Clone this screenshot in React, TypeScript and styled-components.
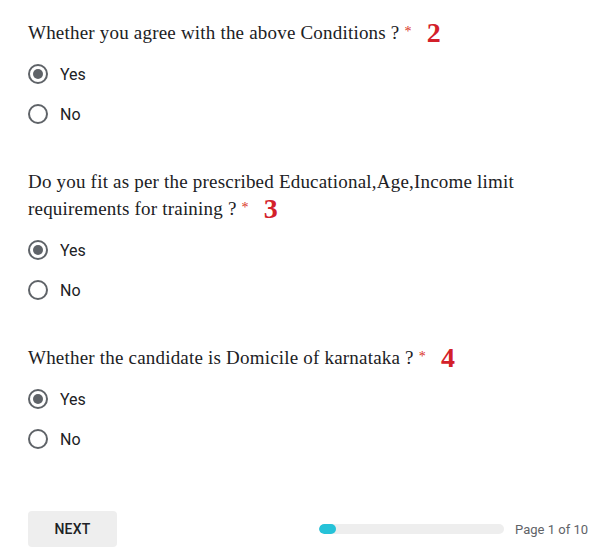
import React from "react";
import styled, { createGlobalStyle } from "styled-components";

const Global = createGlobalStyle`
  html, body { margin: 0; padding: 0; background: #ffffff; }
  body { width: 589px; height: 547px; overflow: hidden; }
`;

const Page = styled.div`
  box-sizing: border-box;
  width: 589px;
  padding: 19px 1px 0 28px;
  display: flex;
  flex-direction: column;
`;

const Question = styled.section`
  display: flex;
  flex-direction: column;
  & + & { margin-top: 34px; }
`;

const Title = styled.div`
  font-family: "Liberation Serif", "DejaVu Serif", serif;
  font-size: 19px;
  letter-spacing: 0.2px;
  line-height: 27px;
  color: #202124;
  max-width: 505px;
  margin-bottom: 8px;
`;

const Required = styled.span`
  color: #d93025;
  font-size: 14px;
  line-height: 0;
  vertical-align: 3px;
  margin-left: 5px;
`;

const Marker = styled.span`
  color: #d3202a;
  font-family: "Liberation Serif", serif;
  font-weight: 700;
  font-size: 28px;
  line-height: 0;
  margin-left: 15px;
  position: relative;
  top: 3px;
`;

const Option = styled.label`
  display: flex;
  align-items: center;
  height: 40px;
  gap: 12px;
  font-family: Roboto, "Liberation Sans", sans-serif;
  font-size: 16px;
  color: #202124;
`;

const Radio = styled.span<{ $checked?: boolean }>`
  box-sizing: border-box;
  width: 20px;
  height: 20px;
  border-radius: 50%;
  border: 2px solid #5f6368;
  display: flex;
  align-items: center;
  justify-content: center;
  &::after {
    content: "";
    width: 10px;
    height: 10px;
    border-radius: 50%;
    background: #5f6368;
    display: ${(p) => (p.$checked ? "block" : "none")};
  }
`;

const Footer = styled.div`
  margin-top: 52px;
  display: flex;
  align-items: center;
  justify-content: space-between;
`;

const NextButton = styled.button`
  box-sizing: border-box;
  width: 89px;
  height: 36px;
  border: none;
  border-radius: 4px;
  background: #eeeeee;
  font-family: Roboto, "Liberation Sans", sans-serif;
  font-weight: 500;
  font-size: 14px;
  color: #202124;
  letter-spacing: 0.2px;
`;

const Progress = styled.div`
  display: flex;
  align-items: center;
  gap: 11px;
`;

const Track = styled.div`
  width: 185px;
  height: 10px;
  border-radius: 5px;
  background: #eeeeee;
  overflow: hidden;
`;

const Fill = styled.div`
  height: 100%;
  border-radius: 5px;
  background: #26c2d8;
`;

const PageText = styled.span`
  font-family: Roboto, "Liberation Sans", sans-serif;
  font-size: 13px;
  color: #5f6368;
`;

const questions = [
  { text: "Whether you agree with the above Conditions ?", n: "2" },
  { text: "Do you fit as per the prescribed Educational,Age,Income limit requirements for training ?", n: "3" },
  { text: "Whether the candidate is Domicile of karnataka ?", n: "4" },
];

export default function App() {
  return (
    <>
      <Global />
      <Page>
        {questions.map((q) => (
          <Question key={q.n}>
            <Title>
              {q.text}
              <Required>*</Required>
              <Marker>{q.n}</Marker>
            </Title>
            <Option>
              <Radio $checked />
              Yes
            </Option>
            <Option>
              <Radio />
              No
            </Option>
          </Question>
        ))}
        <Footer>
          <NextButton>NEXT</NextButton>
          <Progress>
            <Track>
              <Fill style={{ width: `${(17 / 185) * 100}%` }} />
            </Track>
            <PageText>Page 1 of 10</PageText>
          </Progress>
        </Footer>
      </Page>
    </>
  );
}
